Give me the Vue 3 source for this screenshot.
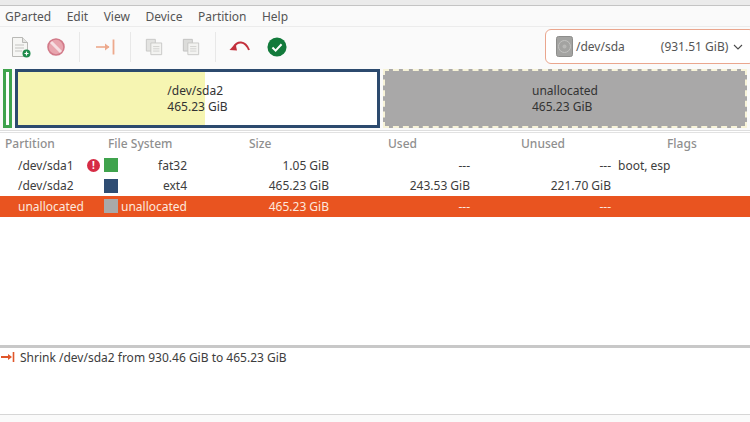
<script setup>
const menus = ['GParted', 'Edit', 'View', 'Device', 'Partition', 'Help']

const rows = [
  { name: '/dev/sda1', warn: true, color: '#3fa34d', fs: 'fat32', size: '1.05 GiB', used: '---', unused: '---', flags: 'boot, esp' },
  { name: '/dev/sda2', warn: false, color: '#2f4d73', fs: 'ext4', size: '465.23 GiB', used: '243.53 GiB', unused: '221.70 GiB', flags: '' },
  { name: 'unallocated', warn: false, color: '#a9a9a9', fs: 'unallocated', size: '465.23 GiB', used: '---', unused: '---', flags: '', selected: true },
]
</script>

<template>
  <div class="window">
    <div class="titlestrip"></div>

    <nav class="menubar">
      <span v-for="m in menus" :key="m">{{ m }}</span>
    </nav>

    <div class="toolbar">
      <div class="tools">
        <svg class="tool new" width="22" height="24" viewBox="0 0 22 24">
          <path d="M2.5 2.5h10l5 5v14h-15z" fill="#f6f6f4" stroke="#b9b9b6" />
          <path d="M12.5 2.5v5h5" fill="#e4e4e1" stroke="#b9b9b6" />
          <path d="M5 10h9M5 13h9M5 16h7" stroke="#c4c4c1" />
          <circle cx="16.5" cy="18.5" r="4" fill="#1d8a4a" />
          <path d="M14.5 18.5h4M16.5 16.5v4" stroke="#fff" stroke-width="1.2" />
        </svg>
        <svg class="tool del" width="18" height="18" viewBox="0 0 18 18">
          <circle cx="9" cy="9" r="8" fill="#e8a5ae" stroke="#d27a89" stroke-width="1.6" />
          <path d="M4 4l10 10" stroke="#f6dfe2" stroke-width="3" />
        </svg>
        <i class="sep first"></i>
        <svg class="tool resize" width="21" height="18" viewBox="0 0 21 18">
          <path d="M1 9h13" stroke="#eda98c" stroke-width="1.6" />
          <path d="M10 5.500l4.500 3.500-4.500 3.500z" fill="#eda98c" />
          <path d="M18.500 1.500v15" stroke="#eda98c" stroke-width="1.8" />
        </svg>
        <i class="sep second"></i>
        <svg class="tool copy" width="18" height="18" viewBox="0 0 20 20">
          <path d="M1.500 1.500h10v13h-10z" fill="#e3e3e1" stroke="#c6c6c4" />
          <path d="M6.500 5.500h12v13h-12z" fill="#f3f3f1" stroke="#c6c6c4" />
          <path d="M9 9.500h7M9 12h7M9 14.500h7" stroke="#cfcfcd" />
        </svg>
        <svg class="tool paste" width="18" height="18" viewBox="0 0 20 20">
          <path d="M1.500 1.500h10v13h-10z" fill="#dcdcda" stroke="#c0c0be" />
          <path d="M6.500 5.500h12v13h-12z" fill="#f3f3f1" stroke="#c6c6c4" />
          <path d="M9 9.500h7M9 12h7M9 14.500h7" stroke="#cfcfcd" />
        </svg>
        <i class="sep third"></i>
        <svg class="tool undo" width="21" height="16" viewBox="0 0 21 16">
          <path d="M5 8c3-6 11-7 15 3" fill="none" stroke="#c3303c" stroke-width="2" />
          <path d="M.5 11l6-6.500 1.500 7z" fill="#c3303c" />
        </svg>
        <svg class="tool apply" width="20" height="20" viewBox="0 0 22 22">
          <circle cx="11" cy="11" r="10.500" fill="#127a3b" />
          <path d="M6 11.500l3.500 3.500 6.500-7" fill="none" stroke="#fff" stroke-width="2.200" />
        </svg>
      </div>

      <div class="combo">
        <svg width="17" height="21" viewBox="0 0 17 21">
          <rect x=".5" y=".5" width="16" height="20" rx="2" fill="#a3a3a1" stroke="#8d8d8b" />
          <circle cx="8.500" cy="10.500" r="6" fill="none" stroke="#c2c2c0" />
          <circle cx="8.500" cy="10.500" r="2" fill="#b8b8b6" />
        </svg>
        <span class="dev">/dev/sda</span>
        <span class="cap">(931.51 GiB)</span>
        <svg class="chev" width="10" height="6" viewBox="0 0 10 6">
          <path d="M1 1l4 4 4-4" fill="none" stroke="#4a4a4a" stroke-width="1.100" />
        </svg>
      </div>
    </div>

    <div class="graph">
      <div class="seg small"></div>
      <div class="seg main">
        <div class="seg-label">/dev/sda2<br />465.23 GiB</div>
      </div>
      <div class="seg free">
        <div class="seg-label">unallocated<br />465.23 GiB</div>
      </div>
    </div>

    <div class="table">
      <div class="thead">
        <span>Partition</span>
        <span>File System</span>
        <span>Size</span>
        <span>Used</span>
        <span>Unused</span>
        <span>Flags</span>
      </div>
      <div v-for="r in rows" :key="r.name" class="row" :class="{ selected: r.selected }">
        <span class="name">{{ r.name }}</span>
        <span class="warn-cell">
          <span v-if="r.warn" class="warn">!</span>
        </span>
        <span class="swatch" :style="{ background: r.color }"></span>
        <span class="num">{{ r.fs }}</span>
        <span class="num">{{ r.size }}</span>
        <span class="num">{{ r.used }}</span>
        <span class="num">{{ r.unused }}</span>
        <span class="flags">{{ r.flags }}</span>
      </div>
    </div>

    <div class="log">
      <svg width="15" height="10" viewBox="0 0 15 10">
        <path d="M1 5h9" stroke="#e0562a" stroke-width="2" />
        <path d="M8 2l4 3-4 3z" fill="#e0562a" />
        <path d="M13.500 0v10" stroke="#e0562a" stroke-width="1.600" />
      </svg>
      <span>Shrink /dev/sda2 from 930.46 GiB to 465.23 GiB</span>
    </div>

    <div class="status"></div>
  </div>
</template>

<style scoped>
.window {
  width: 750px;
  height: 422px;
  display: flex;
  flex-direction: column;
  overflow: hidden;
  background: #fff;
  color: #3d3d3d;
  font-family: "Noto Sans", "Open Sans", sans-serif;
  font-size: 12px;
}
.titlestrip {
  height: 5px;
  flex: none;
  background: #ebebeb;
  border-bottom: 1px solid #c4c4c4;
}
.menubar {
  height: 20px;
  flex: none;
  display: flex;
  align-items: center;
  gap: 15.500px;
  padding-left: 5px;
  background: #fafafa;
  color: #555;
}
.toolbar {
  height: 40px;
  flex: none;
  display: flex;
  justify-content: space-between;
  align-items: center;
  background: #fafafa;
  border-top: 1px solid #ececec;
  box-sizing: border-box;
}
.tools {
  display: flex;
  align-items: center;
  padding-left: 10px;
}
.tool {
  flex: none;
}
.del {
  margin-left: 15px;
}
.sep {
  width: 1px;
  height: 30px;
  background: #e8e8e8;
}
.sep.first {
  margin-left: 14px;
}
.resize {
  margin-left: 15px;
}
.sep.second {
  margin-left: 14px;
}
.copy {
  margin-left: 14px;
}
.paste {
  margin-left: 19px;
}
.sep.third {
  margin-left: 15px;
}
.undo {
  margin-left: 13px;
}
.apply {
  margin-left: 17px;
}
.combo {
  width: 210px;
  height: 35px;
  margin-right: -5px;
  flex: none;
  box-sizing: border-box;
  display: flex;
  align-items: center;
  padding-left: 10px;
  background: #fff;
  border: 1.500px solid #eaa68e;
  border-radius: 6px;
  color: #555;
}
.dev {
  margin-left: 3px;
}
.cap {
  margin-left: 36px;
}
.chev {
  margin-left: 5px;
}
.graph {
  height: 65px;
  flex: none;
  box-sizing: border-box;
  display: flex;
  gap: 3px;
  padding: 3px 3px 2px;
  background: #fafafa;
  border-bottom: 1px solid #dedede;
}
.seg {
  box-sizing: border-box;
  display: flex;
  align-items: center;
  justify-content: center;
}
.seg-label {
  line-height: 16px;
  color: #333;
}
.small {
  width: 9px;
  border: 3px solid #3fa34d;
  background: #fff;
}
.main {
  width: 365px;
  border: 3px solid #2c4a6e;
  background: linear-gradient(90deg, #f6f5b2 187px, #fff 187px);
}
.free {
  width: 364px;
  border: 2px dashed #f7f3d8;
  background: #a9a8a8;
}
.table {
  flex: 1;
  border-top: 1px solid #e2e2e2;
  background: #fff;
  margin-top: 1px;
}
.thead {
  height: 22px;
  display: grid;
  grid-template-columns: 103px 141px 139px 133px 146px 1fr;
  align-items: center;
  padding: 0 0 2px 5px;
  box-sizing: border-box;
  color: #8f8f8f;
  font-weight: 500;
}
.row {
  height: 20.500px;
  display: grid;
  grid-template-columns: 87px 17px 15px 68px 142px 141px 141px 1fr;
  align-items: center;
  color: #3d3d3d;
}
.row.selected {
  background: #e95420;
  color: #fde8de;
}
.name {
  padding-left: 18px;
  white-space: nowrap;
}
.warn-cell {
  display: flex;
  align-items: center;
}
.warn {
  width: 13px;
  height: 13px;
  border-radius: 50%;
  background: #d62c45;
  color: #fff;
  font-size: 10px;
  font-weight: 700;
  line-height: 13px;
  text-align: center;
}
.swatch {
  width: 14px;
  height: 14px;
}
.num {
  text-align: right;
  white-space: nowrap;
}
.flags {
  padding-left: 7px;
}
.log {
  height: 69px;
  flex: none;
  box-sizing: border-box;
  display: flex;
  align-items: flex-start;
  gap: 5px;
  padding-top: 1px;
  border-top: 3px solid #c8c8c8;
  background: #fff;
}
.log svg {
  margin-top: 3px;
}
.status {
  height: 7px;
  flex: none;
  background: #fafafa;
  border-top: 1px solid #d6d6d6;
}
</style>
